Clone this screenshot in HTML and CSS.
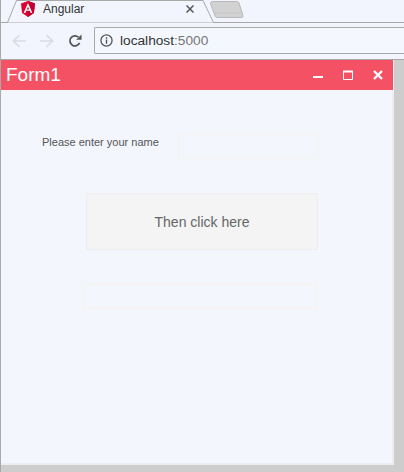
FILE: index.html
```html
<!DOCTYPE html>
<html lang="en">
<head>
<meta charset="utf-8">
<title>Angular</title>
<link rel="stylesheet" href="styles.css">
</head>
<body>
<div class="browser">
  <div class="tabstrip">
    <div class="tab">
      <svg class="tab-shape" width="208" height="23" viewBox="0 0 208 23"><path d="M0 22.5H1.5L10.5 0.5H197L207.5 22.5" fill="#f2f5fe" stroke="#a8a8a8"/></svg>
      <svg class="favicon" width="14" height="16" viewBox="0 0 14 16"><path d="M7 0L0 2.5L1.1 12L7 16L12.9 12L14 2.5Z" fill="#dd0031"/><path d="M7 0L14 2.5L12.9 12L7 16Z" fill="#c3002f"/><path d="M7 2L2.6 12H4.3L5.2 9.7H8.8L9.7 12H11.4ZM7 5.7L8.2 8.4H5.8Z" fill="#fff"/></svg>
      <span class="tab-title">Angular</span>
      <svg class="tab-close" width="8" height="8" viewBox="0 0 8 8"><path d="M0.5 0.5L7.5 7.5M7.5 0.5L0.5 7.5" stroke="#555" stroke-width="1.5"/></svg>
    </div>
    <svg class="newtab" width="34" height="18" viewBox="0 0 34 18"><path d="M0.5 2.5Q0.5 0.5 2.5 0.5H26.5Q28.5 0.5 29 2L33 14.5Q33.5 16.5 31.5 16.5H7.5Q5.5 16.5 5 15Z" fill="#d2d2d2" stroke="#b8b8b8"/><path d="M5 12H32" stroke="#c4c4c4"/></svg>
  </div>
  <div class="toolbar">
    <svg width="14" height="14" viewBox="0 0 14 14"><path d="M14 7H1.5M7.5 1L1.5 7L7.5 13" fill="none" stroke="#d9dce3" stroke-width="1.7"/></svg>
    <svg width="14" height="14" viewBox="0 0 14 14"><path d="M0 7H12.5M6.5 1L12.5 7L6.5 13" fill="none" stroke="#d9dce3" stroke-width="1.7"/></svg>
    <svg width="14" height="14" viewBox="0 0 15 15"><path d="M12.4 9.5A5.4 5.4 0 1 1 11.2 3.4" fill="none" stroke="#555" stroke-width="1.9"/><path d="M8.8 6.2H14.5V0.5Z" fill="#555"/></svg>
    <div class="omnibox">
      <svg width="13" height="13" viewBox="0 0 14 14"><circle cx="7" cy="7" r="6" fill="none" stroke="#555" stroke-width="1.4"/><path d="M7 6V10.4M7 3.4V5" stroke="#555" stroke-width="1.5"/></svg>
      <span class="host">localhost<span class="port">:5000</span></span>
    </div>
  </div>
</div>
<div class="viewport">
  <div class="form">
    <div class="titlebar">
      <span class="form-title">Form1</span>
      <div class="controls">
        <svg width="10" height="10" viewBox="0 0 10 10"><path d="M0 7H10" stroke="#fff" stroke-width="2"/></svg>
        <svg width="10" height="10" viewBox="0 0 10 10"><path d="M0.5 1.5H9.5V9.5H0.5Z" fill="none" stroke="#fff"/><path d="M0 1.5H10" stroke="#fff" stroke-width="2"/></svg>
        <svg width="10" height="10" viewBox="0 0 10 10"><path d="M1 1L9 9M9 1L1 9" stroke="#fff" stroke-width="2.4"/></svg>
      </div>
    </div>
    <div class="form-body">
      <div class="name-row">
        <label class="name-label" for="name">Please enter your name</label>
        <input class="field name-input" id="name" type="text">
      </div>
      <button class="action" type="button">Then click here</button>
      <input class="field result" type="text">
    </div>
  </div>
</div>
</body>
</html>
```
FILE: styles.css
```css
* { box-sizing: border-box; }
html, body { margin: 0; padding: 0; }
body {
  width: 404px;
  height: 472px;
  overflow: hidden;
  background: #cdcdcd;
  border-left: 1px solid #a9a9a9;
  font-family: "Liberation Sans", Arial, sans-serif;
}
.browser { height: 60px; background: #f2f5fe; display: flex; flex-direction: column; }
.tabstrip { height: 23px; display: flex; align-items: flex-start; border-bottom: 1px solid #a8a8a8; padding-left: 5px; }
.tab { width: 208px; height: 23px; flex: none; position: relative; display: flex; align-items: center; padding: 0 0 5px 15px; }
.tab-shape { position: absolute; left: 0; top: 0; }
.favicon { position: relative; margin-right: 8px; }
.tab-title { position: relative; font-size: 12px; color: #333; flex: 1; }
.tab-close { position: relative; margin-right: 20px; }
.newtab { margin: 1px 0 0 -4px; flex: none; }
.toolbar { height: 37px; display: flex; align-items: center; padding-left: 11px; gap: 14px; border-bottom: 1px solid #a8a8a8; }
.omnibox { flex: 1; height: 27px; margin: 0 0 1px -2px; display: flex; align-items: center; gap: 7px; padding-left: 5px; background: #f5f7fe; border: 1px solid #aaa; border-right: 0; border-radius: 2px 0 0 2px; }
.host { font-size: 13.7px; color: #333; }
.port { color: #777; }
.viewport { height: 412px; padding: 0 10px 7px 0; }
.form { height: 405px; background: #f3f6fd; border-right: 2px solid #eceef2; border-bottom: 2px solid #eceef2; display: flex; flex-direction: column; }
.titlebar { height: 30px; flex: none; margin-right: -1px; background: #f45264; display: flex; align-items: center; justify-content: space-between; padding: 0 10px 0 5px; }
.form-title { font-size: 19px; color: #fff; }
.controls { display: flex; gap: 20px; align-items: center; }
.form-body { flex: 1; display: flex; flex-direction: column; align-items: flex-start; padding-top: 44px; }
.name-row { display: flex; align-items: flex-start; margin-left: 41px; }
.name-label { font-size: 11px; color: #555; width: 136px; margin-top: 2px; }
.field { display: block; background: #f3f6fd; border: 1px solid #f5f3ec; outline: 0; padding: 0; }
.name-input { width: 141px; height: 25px; }
.action { width: 232px; height: 57px; margin: 34px 0 0 85px; background: #f4f4f4; border: 1px solid #ededed; border-radius: 2px; color: #666; font: 14px "Liberation Sans", Arial, sans-serif; padding: 0; }
.result { width: 233px; height: 25px; margin: 34px 0 0 83px; border-color: #f8f3e6; border-radius: 2px; }
```
